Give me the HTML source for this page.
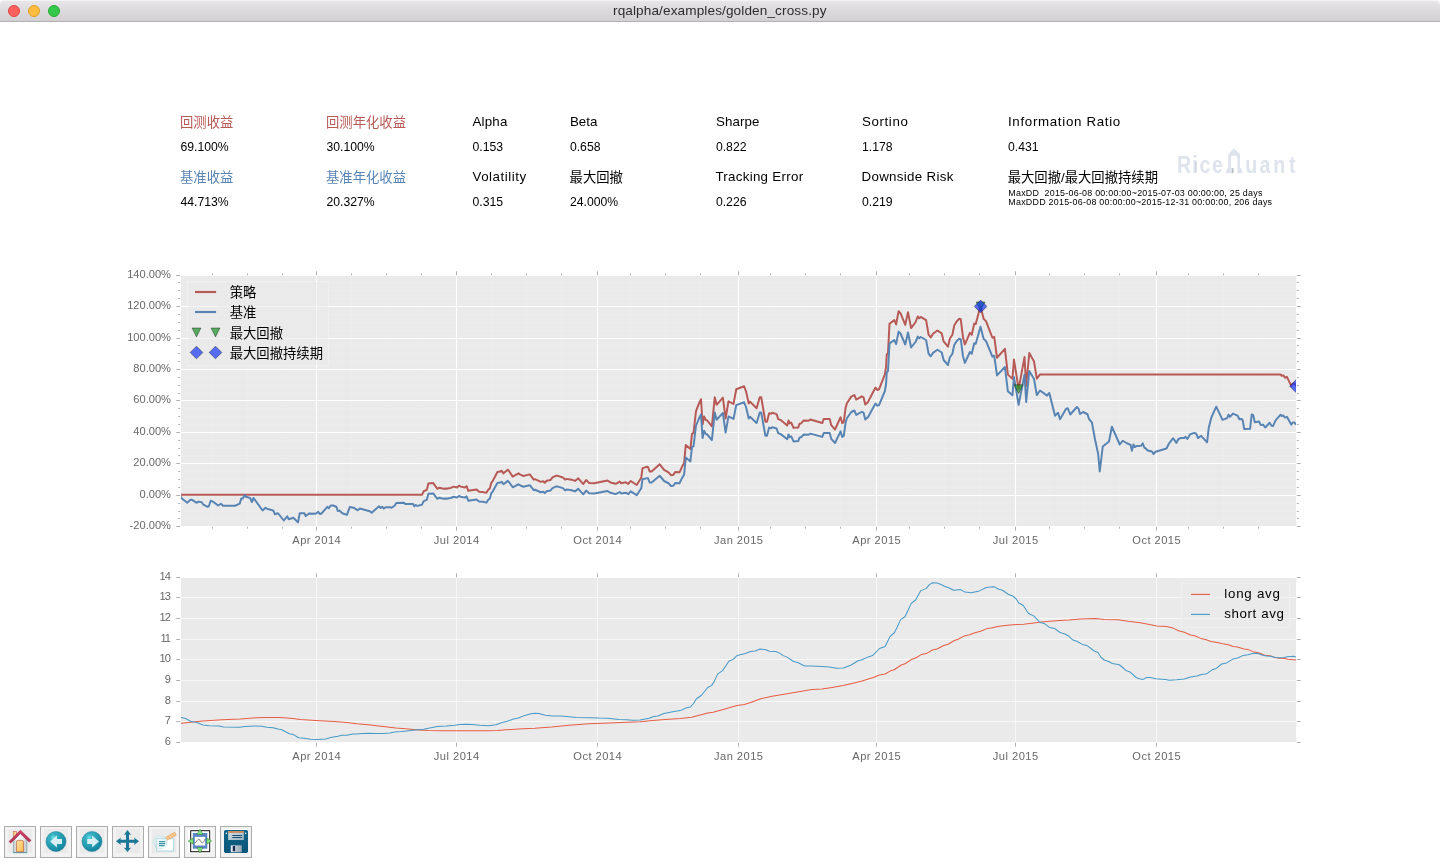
<!DOCTYPE html>
<html lang="en"><head><meta charset="utf-8"><title>rqalpha/examples/golden_cross.py</title>
<style>
html,body{margin:0;padding:0;background:#fff;}
body{width:1440px;height:864px;position:relative;overflow:hidden;font-family:"Liberation Sans",sans-serif;}
#tb{position:absolute;left:0;top:0;width:1440px;height:21px;background:linear-gradient(#e9e7e9,#dcdadc 50%,#d2d0d2);border-bottom:1px solid #b2b0b2;border-top-left-radius:4.5px;border-top-right-radius:4.5px;box-shadow:inset 0 1px 0 #f5f4f5;}
#tb i{position:absolute;top:5px;width:12px;height:12px;box-sizing:border-box;border-radius:50%;border:0.6px solid;}
#tb span{will-change:transform;position:absolute;left:613.2px;top:3.4px;white-space:nowrap;font-size:13.6px;line-height:normal;color:#2e2e2e;letter-spacing:0.11px;}
#fig{position:absolute;left:0;top:0;}
#txt{position:absolute;left:0;top:0;width:1440px;height:864px;will-change:transform;}
.t{position:absolute;white-space:nowrap;line-height:normal;}
.cjk{font-family:"Liberation Sans","Noto Sans CJK SC",sans-serif;font-size:13.33px;}
</style></head><body>
<div id="tb"><i style="left:8px;background:#fc615d;border-color:#e0443e"></i><i style="left:28px;background:#fdbc40;border-color:#dea123"></i><i style="left:48px;background:#34c84a;border-color:#27aa35"></i><span>rqalpha/examples/golden_cross.py</span></div>
<svg id="fig" width="1440" height="864" viewBox="0 0 1440 864">
<rect x="180" y="275" width="1116" height="251" fill="#eaeaea"/>
<path d="M212.5 274.58V526.27M247.5 274.58V526.27M282.5 274.58V526.27M351.5 274.58V526.27M386.5 274.58V526.27M421.5 274.58V526.27M491.5 274.58V526.27M526.5 274.58V526.27M561.5 274.58V526.27M630.5 274.58V526.27M665.5 274.58V526.27M700.5 274.58V526.27M770.5 274.58V526.27M805.5 274.58V526.27M840.5 274.58V526.27M909.5 274.58V526.27M944.5 274.58V526.27M979.5 274.58V526.27M1049.5 274.58V526.27M1084.5 274.58V526.27M1119.5 274.58V526.27M1188.5 274.58V526.27M1223.5 274.58V526.27M1258.5 274.58V526.27M180 518.5H1296M180 511.5H1296M180 503.5H1296M180 487.5H1296M180 479.5H1296M180 471.5H1296M180 455.5H1296M180 448.5H1296M180 440.5H1296M180 424.5H1296M180 416.5H1296M180 408.5H1296M180 393.5H1296M180 385.5H1296M180 377.5H1296M180 361.5H1296M180 353.5H1296M180 345.5H1296M180 330.5H1296M180 322.5H1296M180 314.5H1296M180 298.5H1296M180 290.5H1296M180 282.5H1296" stroke="#fff" stroke-width="0.22" stroke-opacity="0.55" fill="none"/>
<path d="M316.5 274.58V526.27M456.5 274.58V526.27M597.5 274.58V526.27M738.5 274.58V526.27M876.5 274.58V526.27M1015.5 274.58V526.27M1156.5 274.58V526.27M180 526.5H1296M180 495.5H1296M180 463.5H1296M180 432.5H1296M180 400.5H1296M180 369.5H1296M180 338.5H1296M180 306.5H1296M180 275.5H1296" stroke="#fff" stroke-width="1.11" stroke-opacity="1" fill="none"/>
<clipPath id="c1"><rect x="180" y="274.58" width="1116" height="251.69"/></clipPath>
<g clip-path="url(#c1)">
<polyline points="180,494.81 422,494.81 423.7,491.25 426.8,489.87 428.4,483.39 433.25,483.07 434.5,484.88 437.4,488.81 439.1,487.75 443.7,488.81 445.75,488.54 446.6,488.81 448.7,488.22 450.75,487.96 453.7,486.63 457,487.53 459.1,485.73 460.75,486.63 464.9,487.53 466.6,486.15 468.25,490.83 476.6,489.55 479.1,491.68 482.8,491.94 486.4,492.84 488.25,489.76 489.9,488.38 491.2,483.07 492.8,480.84 497.4,472.02 500.3,471.6 501.8,470.7 503.5,473.35 507.8,469.79 509,470.96 512.7,476.59 518.5,473.35 520.3,474.68 523.5,476.01 529.5,474.41 530.4,475.1 533.75,479.67 535,479.19 540.8,481.85 543.3,481.27 544.8,482.75 546.7,480.73 550.4,480.1 552.5,477.44 555.8,475.85 557.9,475.85 562.9,477.44 565,479.67 567.1,478.93 571.7,479.67 575,480.95 578.3,478.29 583.3,484.03 586.1,480.1 589.2,482.97 594.2,483.18 607.5,480.52 610.4,482.43 615.8,483.82 619.6,481.58 621.25,483.18 625.8,482.33 628.3,483.92 630.7,480.95 636.7,484.98 641.25,477.65 642.5,468.09 647.3,466.82 648,466.98 649.75,471.6 651.6,471.6 659.75,464.32 664.1,469.9 668.5,472.29 671,475.21 673.25,474.94 675.4,471.92 679.5,472.29 682.25,466.29 684.1,463.26 685.75,445.04 690.4,449.08 692,433.78 693.5,433.14 696,411.21 698.5,404.57 701,399.26 702.6,424.22 704.1,416.52 705.75,419.86 707.25,420.5 711.9,426.45 714.75,397.24 716.6,404.83 722.9,397.66 725.6,418.48 728.5,401.27 733.5,403.93 736.25,389.27 744.1,386.24 746,391.29 748.75,403.51 750,401.65 756.6,408.29 759.75,397.24 761.25,397.24 765.4,421.83 767,421.83 769.1,413.17 771,413.86 772.25,412.8 776.6,414.13 778.25,419.17 780.4,419.86 787.25,425.55 788.5,420.5 789.75,423.42 791.25,422.52 793.5,427.83 798.25,427.51 799.5,423.8 801,423.42 803.75,420.5 808.5,420.77 810.4,419.55 822.25,423.05 823.75,418.91 829.75,418.91 831.25,425.18 835,429.53 840.6,417.21 842.25,423.16 843.75,422.1 845.6,407.86 846.9,403.24 851.25,396.6 854.4,395.01 856.25,399.68 861.9,396.33 863.5,397.24 865.25,404.57 868.1,401.91 873.5,391.29 875.6,387.57 877.25,389.96 879,389.27 884.9,374.29 886.1,366.32 886.75,354.37 888,353.05 889.5,323.83 894.25,320.11 896.1,324.47 898.6,311.19 900.5,313.21 905.25,324.9 908,312.15 911.1,328.08 915.5,322.24 917.75,316.5 919.25,318.26 920.75,316.93 926.1,320.11 928.6,334.72 930.75,337.38 933,333.82 937.4,330.47 941.75,333.39 943.6,341.36 948,346.67 949.9,338.44 952.4,334.72 954.25,325.43 956.75,321.18 959.25,318.79 960.75,319.16 963,337.38 964.9,344.44 969.9,332.86 971.75,334.72 974.25,323.57 975.75,324.1 980.5,305.99 983.6,318.79 986.1,321.44 992.4,337.75 994.25,336.85 997,357.72 1004.9,348.8 1007.9,374.61 1012.45,378.86 1014,359.53 1018.6,389.06 1024.5,357.08 1026.2,385.98 1029.3,353.1 1034,361.44 1036.8,378.65 1040,374.4 1280.6,374.4 1281.7,375.91 1283.4,375.33 1285,377.76 1286.9,376.84 1291.25,385.88 1292.8,383.44 1294.6,383.44 1296,386.11" fill="none" stroke="#b75955" stroke-width="1.98" stroke-linejoin="round"/>
<polyline points="180,495.2 181.6,498.2 187.2,502.7 190.5,499.85 192,499.8 196.75,502.8 198.4,501.6 201.75,502.2 203.4,504.7 207.6,506.9 208.8,506.3 210.7,500.7 213.8,502.2 218.2,505.5 220.9,503.7 223,505.75 235.1,505.75 239.7,503.7 241.3,498.4 243,498.4 244.4,495.1 245.9,496.75 250.1,498 251.9,502 253.6,498 262.6,510.5 265.5,507.8 267.6,509 272.6,510.25 273.8,511.3 274.8,514.25 278,513.25 283.8,520.5 287.2,516.3 288.8,519.25 293.4,517.75 298,522.4 299.7,513.25 304.4,513.25 305.7,516 309,513.5 315.7,513.7 318.2,511.8 320,514.1 321.5,513.5 327.3,506.8 328.8,508.25 330.7,505.5 333.2,505.5 336.5,507 337.75,511 339.4,510.6 342.3,513.25 346.9,514.9 349.8,507 353.6,507.7 357.75,510.3 359.8,508.5 369.8,511.2 371.7,512.8 379,506.2 380.7,508 382.3,506.8 383.8,508.5 385.7,507.2 389.8,507.2 391.7,507.8 394.8,505.5 396.3,503.1 404,502.8 405.25,504.1 413.2,504.1 414.3,506.3 415.75,505.1 417.4,505.9 422,504.7 423.7,501.1 426.8,499.8 428.4,493.7 433.25,493.4 434.5,495.1 437.4,498.8 439.1,497.8 443.7,498.8 445.75,498.55 446.6,498.8 448.7,498.25 450.75,498 453.7,496.75 457,497.6 459.1,495.9 460.75,496.75 464.9,497.6 466.6,496.3 468.25,500.7 476.6,499.5 479.1,501.5 482.8,501.75 486.4,502.6 488.25,499.7 489.9,498.4 491.2,493.4 492.8,491.3 497.4,483 500.3,482.6 501.8,481.75 503.5,484.25 507.8,480.9 509,482 512.7,487.3 518.5,484.25 520.3,485.5 523.5,486.75 529.5,485.25 530.4,485.9 533.75,490.2 535,489.75 540.8,492.25 543.3,491.7 544.8,493.1 546.7,491.2 550.4,490.6 552.5,488.1 555.8,486.6 557.9,486.6 562.9,488.1 565,490.2 567.1,489.5 571.7,490.2 575,491.4 578.3,488.9 583.3,494.3 586.1,490.6 589.2,493.3 594.2,493.5 607.5,491 610.4,492.8 615.8,494.1 619.6,492 621.25,493.5 625.8,492.7 628.3,494.2 630.7,491.4 636.7,495.2 641.25,488.3 642.5,479.3 647.3,478.1 648,478.25 649.75,482.6 651.6,482.6 659.75,475.75 664.1,481 668.5,483.25 671,486 673.25,485.75 675.4,482.9 679.5,483.25 682.25,477.6 684.1,474.75 685.75,457.6 690.4,461.4 692,447 693.5,446.4 696,425.75 698.5,419.5 701,414.5 702.6,438 704.1,430.75 705.75,433.9 707.25,434.5 711.9,440.1 714.75,412.6 716.6,419.75 722.9,413 725.6,432.6 728.5,416.4 733.5,418.9 736.25,405.1 744.1,402.25 746,407 748.75,418.5 750,416.75 756.6,423 759.75,412.6 761.25,412.6 765.4,435.75 767,435.75 769.1,427.6 771,428.25 772.25,427.25 776.6,428.5 778.25,433.25 780.4,433.9 787.25,439.25 788.5,434.5 789.75,437.25 791.25,436.4 793.5,441.4 798.25,441.1 799.5,437.6 801,437.25 803.75,434.5 808.5,434.75 810.4,433.6 822.25,436.9 823.75,433 829.75,433 831.25,438.9 835,443 840.6,431.4 842.25,437 843.75,436 845.6,422.6 846.9,418.25 851.25,412 854.4,410.5 856.25,414.9 861.9,411.75 863.5,412.6 865.25,419.5 868.1,417 873.5,407 875.6,403.5 877.25,405.75 879,405.1 884.9,391 886.1,383.5 886.75,372.25 888,371 889.5,343.5 894.25,340 896.1,344.1 898.6,331.6 900.5,333.5 905.25,344.5 908,332.5 911.1,347.5 915.5,342 917.75,336.6 919.25,338.25 920.75,337 926.1,340 928.6,353.75 930.75,356.25 933,352.9 937.4,349.75 941.75,352.5 943.6,360 948,365 949.9,357.25 952.4,353.75 954.25,345 956.75,341 959.25,338.75 960.75,339.1 963,356.25 964.9,362.9 969.9,352 971.75,353.75 974.25,343.25 975.75,343.75 980.5,326.7 983.6,338.75 986.1,341.25 992.4,356.6 994.25,355.75 997,375.4 1004.9,367 1007.9,391.3 1012.45,395.3 1014,377.1 1018.6,404.9 1024.5,374.8 1026.2,402 1029.3,371.05 1034,378.9 1036.8,395.1 1040,390.45 1047.1,395.6 1049.3,392.95 1055,415.75 1058.1,412.75 1060,419.25 1066.25,408.6 1067.75,408.25 1070.25,414.5 1076.9,407 1078.5,408.6 1080,414 1083.1,412 1087.5,414.25 1089,419 1091.9,422.4 1095,439.25 1098.1,453.6 1099.75,471.5 1102.75,446.5 1109,441.5 1111.9,426.75 1119.75,444.5 1122.75,440.75 1126.9,443.25 1130.6,444.9 1131.9,450.75 1133.5,444.5 1134.75,447 1136.5,446.1 1141.25,445.75 1142.75,443.25 1144.4,447.75 1145.6,448.25 1147.75,450.5 1151.9,451.5 1153.5,454 1155.6,451.75 1166.5,448.5 1168.85,443.75 1173.15,438.2 1176.4,442.9 1178.3,439.2 1180.5,438.05 1184.2,437.9 1185.5,436.9 1187.3,438.9 1190.2,434.2 1194.4,432.9 1196.25,433.75 1198,438.1 1201.1,435.8 1207.1,442.3 1208.75,427.7 1211.6,416.8 1216.25,406.7 1222.5,419.9 1227.2,418.1 1228.5,414.7 1230,416.8 1232.9,413.6 1237.6,415.7 1239.4,419.2 1241.8,418.9 1242.8,420.6 1244.2,429 1250.1,428.75 1251.7,414.4 1253.2,415.2 1254.8,422.2 1259,421.5 1260.8,425.1 1263.1,424.6 1265.2,427.5 1269.6,422.8 1271.5,425.8 1273,426.1 1275.6,420.4 1280.6,414.7 1281.7,416 1283.4,415.5 1285,417.6 1286.9,416.8 1291.25,424.6 1292.8,422.5 1294.6,422.5 1296,424.8" fill="none" stroke="#5884b4" stroke-width="1.98" stroke-linejoin="round"/>
<path d="M1014.25 384.75L1023.15 384.75L1018.7 393.65Z" fill="#199022" fill-opacity="0.7" stroke="#000" stroke-opacity="0.6" stroke-width="0.6"/>
<path d="M976.15 301.95L985.05 301.95L980.6 310.85Z" fill="#199022" fill-opacity="0.7" stroke="#000" stroke-opacity="0.6" stroke-width="0.6"/>
<path d="M980.6 300.05L986.95 306.4L980.6 312.75L974.25 306.4Z" fill="#1536f5" fill-opacity="0.7" stroke="#000" stroke-opacity="0.6" stroke-width="0.6"/>
<path d="M1296 379.85L1302.35 386.2L1296 392.55L1289.65 386.2Z" fill="#1536f5" fill-opacity="0.7" stroke="#000" stroke-opacity="0.6" stroke-width="0.6"/>
</g>
<rect x="180.5" y="275.5" width="1116" height="251" fill="none" stroke="#fff" stroke-width="1"/>
<path d="M316.5 275.3v-4M316.5 526.7v4M456.5 275.3v-4M456.5 526.7v4M597.5 275.3v-4M597.5 526.7v4M738.5 275.3v-4M738.5 526.7v4M876.5 275.3v-4M876.5 526.7v4M1015.5 275.3v-4M1015.5 526.7v4M1156.5 275.3v-4M1156.5 526.7v4M180.2 526.5h-4M1296.8 526.5h4M180.2 495.5h-4M1296.8 495.5h4M180.2 463.5h-4M1296.8 463.5h4M180.2 432.5h-4M1296.8 432.5h4M180.2 400.5h-4M1296.8 400.5h4M180.2 369.5h-4M1296.8 369.5h4M180.2 338.5h-4M1296.8 338.5h4M180.2 306.5h-4M1296.8 306.5h4M180.2 275.5h-4M1296.8 275.5h4" stroke="#686868" stroke-width="0.52" fill="none"/>
<path d="M212.5 275.3v-2M212.5 526.7v2M247.5 275.3v-2M247.5 526.7v2M282.5 275.3v-2M282.5 526.7v2M351.5 275.3v-2M351.5 526.7v2M386.5 275.3v-2M386.5 526.7v2M421.5 275.3v-2M421.5 526.7v2M491.5 275.3v-2M491.5 526.7v2M526.5 275.3v-2M526.5 526.7v2M561.5 275.3v-2M561.5 526.7v2M630.5 275.3v-2M630.5 526.7v2M665.5 275.3v-2M665.5 526.7v2M700.5 275.3v-2M700.5 526.7v2M770.5 275.3v-2M770.5 526.7v2M805.5 275.3v-2M805.5 526.7v2M840.5 275.3v-2M840.5 526.7v2M909.5 275.3v-2M909.5 526.7v2M944.5 275.3v-2M944.5 526.7v2M979.5 275.3v-2M979.5 526.7v2M1049.5 275.3v-2M1049.5 526.7v2M1084.5 275.3v-2M1084.5 526.7v2M1119.5 275.3v-2M1119.5 526.7v2M1188.5 275.3v-2M1188.5 526.7v2M1223.5 275.3v-2M1223.5 526.7v2M1258.5 275.3v-2M1258.5 526.7v2M180.2 518.5h-2M1296.8 518.5h2M180.2 511.5h-2M1296.8 511.5h2M180.2 503.5h-2M1296.8 503.5h2M180.2 487.5h-2M1296.8 487.5h2M180.2 479.5h-2M1296.8 479.5h2M180.2 471.5h-2M1296.8 471.5h2M180.2 455.5h-2M1296.8 455.5h2M180.2 448.5h-2M1296.8 448.5h2M180.2 440.5h-2M1296.8 440.5h2M180.2 424.5h-2M1296.8 424.5h2M180.2 416.5h-2M1296.8 416.5h2M180.2 408.5h-2M1296.8 408.5h2M180.2 393.5h-2M1296.8 393.5h2M180.2 385.5h-2M1296.8 385.5h2M180.2 377.5h-2M1296.8 377.5h2M180.2 361.5h-2M1296.8 361.5h2M180.2 353.5h-2M1296.8 353.5h2M180.2 345.5h-2M1296.8 345.5h2M180.2 330.5h-2M1296.8 330.5h2M180.2 322.5h-2M1296.8 322.5h2M180.2 314.5h-2M1296.8 314.5h2M180.2 298.5h-2M1296.8 298.5h2M180.2 290.5h-2M1296.8 290.5h2M180.2 282.5h-2M1296.8 282.5h2" stroke="#686868" stroke-width="0.52" fill="none"/>
<rect x="187.5" y="281.5" width="141" height="84" fill="#eaeaea" fill-opacity="0.5" stroke="#fff" stroke-opacity="0.5" stroke-width="0.56"/>
<path d="M195 292H216.1" stroke="#b75955" stroke-width="2.15"/>
<path d="M195 312H216.1" stroke="#5884b4" stroke-width="2.15"/>
<path d="M192.05 328L200.95 328L196.5 336.9Z" fill="#199022" fill-opacity="0.7" stroke="#000" stroke-opacity="0.6" stroke-width="0.6"/>
<path d="M211.05 328L219.95 328L215.5 336.9Z" fill="#199022" fill-opacity="0.7" stroke="#000" stroke-opacity="0.6" stroke-width="0.6"/>
<path d="M196.5 346.15L202.85 352.5L196.5 358.85L190.15 352.5Z" fill="#1536f5" fill-opacity="0.7" stroke="#000" stroke-opacity="0.6" stroke-width="0.6"/>
<path d="M215.5 346.15L221.85 352.5L215.5 358.85L209.15 352.5Z" fill="#1536f5" fill-opacity="0.7" stroke="#000" stroke-opacity="0.6" stroke-width="0.6"/>
<rect x="180" y="577" width="1116" height="165" fill="#eaeaea"/>
<path d="M316.5 576.61V742M456.5 576.61V742M597.5 576.61V742M738.5 576.61V742M876.5 576.61V742M1015.5 576.61V742M1156.5 576.61V742M180 742.5H1296M180 721.5H1296M180 701.5H1296M180 680.5H1296M180 659.5H1296M180 639.5H1296M180 618.5H1296M180 597.5H1296M180 577.5H1296" stroke="#fff" stroke-width="0.62" stroke-opacity="1" fill="none"/>
<clipPath id="c2"><rect x="180" y="576.61" width="1116" height="165.39"/></clipPath>
<g clip-path="url(#c2)">
<polyline points="180,723.5 190.5,722.25 203,721 221.75,719.75 240.5,719.1 255.5,717.75 268,717.5 280.5,717.5 293,718.5 300.5,719.6 315.5,720.6 334.25,721.5 346.75,722.5 357,723.75 368.5,724.75 381,726.25 396,728.1 408.5,729.1 418.5,730 428.5,730.6 443.5,730.75 468.5,730.75 487.25,730.75 497.25,730.4 506,729.75 518.5,729.1 528.5,728.5 535,728.2 551.5,727 569,725.25 589,723.75 609,723.1 621.5,722.6 640.25,721.75 652.75,720.6 665.25,719.5 680.25,718.5 691.5,717.25 700.25,715 707.75,713.1 713,712.3 723.25,709.4 737,705.6 744.5,704.5 752,701.9 760.75,698.75 772,696.25 787,693.75 803.25,690.9 812,689.6 822,689.1 832,687.5 843.25,685.6 852,683.5 862,680.9 873.25,677.5 879.5,675 885.1,674 891,670.6 893.75,670 901.25,665 905,663.75 911.25,659.6 915.6,658 921.25,654.6 926.25,653.6 932.5,650 936.9,649 943.75,645.5 948.1,644.25 954.4,640.5 958.1,639.25 964.4,635.9 968.75,635 975,632.75 980.6,631.25 986.9,628.6 991.25,628 997.5,626.5 1007.5,625.25 1016.25,624.6 1023.75,624.25 1033.75,623.1 1041.25,622.1 1050,621.25 1060,620.6 1069,620.1 1080.5,619 1095.5,618.5 1104.25,619.4 1118,619.75 1128,621.25 1140.5,622.75 1149.25,624.4 1156.75,626 1166.75,626.6 1173,628.1 1179.25,631 1184.25,632.25 1190.5,635 1195.5,636 1200.5,638.4 1205.5,639.5 1211,641.5 1217.5,642.4 1222.5,643.75 1228.5,644.8 1233,646.5 1237.5,647.1 1244,648.9 1248.3,649.6 1254.2,652.1 1258.3,652.7 1265,655.2 1270,655.8 1275,657.5 1280,658.3 1284.2,658.5 1288.3,659.2 1296,660" fill="none" stroke="#e75d44" stroke-width="1.02" stroke-linejoin="round"/>
<polyline points="180,717.3 185.5,718.5 190.5,721.25 196.75,722.5 203,725 209.25,725.75 219.25,726 223.6,727 239.25,727.25 245.5,726.5 255.5,726 261.75,726.25 266.75,727.25 273,727.75 278,729.1 281.75,729.75 289.25,733.75 293,734.4 298.6,737.75 304.25,738.25 310.5,739.25 316.75,739.5 325.5,739 331.75,737.25 338,736.25 341.75,735.25 346.75,735.25 353,734 357,734.1 362.25,733.5 369.75,733.25 374.75,733.6 383.5,733.6 389.75,733.1 394.75,732.1 401,731.6 407.25,730.9 414.75,730.1 423.5,729.25 429.75,727.9 437.25,726.5 446,726 454.75,725.25 459.75,724.5 466,724.25 472.25,724.6 479.75,725.25 488.5,725.75 496,724.75 502.25,722.5 507.25,721.25 513.5,719.1 518.5,718 524.75,715.4 531,713.75 535,713.2 539,713.5 545.25,715.25 552.75,716 561.5,716 571.5,716.9 576.5,717.5 590.25,717.75 599,718.1 607.75,718.25 619,719.4 626.5,719.75 632.75,720.25 640.25,720 649,718.25 654,716.5 657.75,715.9 664,713.5 669,712.5 674,711.6 680.25,710.6 686.5,707.75 690.25,707.1 693.4,703.75 696.5,698.75 701.5,695.25 707.75,687.5 711.5,685.6 714,681.9 717.6,674.1 722.6,670.6 728.9,661.25 733.25,659.4 737,655.6 744.5,653.75 750.75,651.5 755.1,651 760.1,649 765.75,649.75 769.5,651.25 775.75,651.5 779.5,653.1 783.25,655.6 787,657.1 793.25,661.25 798.25,662.75 804.5,666 812,665.9 822,666.5 829.5,667.1 836.4,668.25 843.25,668 850.75,665.25 857.6,661 862,659.75 868.25,656.9 872.6,655.6 879.5,648.5 885.1,646.5 890.1,636.4 894.4,632.75 896.9,627.75 900.6,619.6 905,616.75 907.5,611.5 911.25,603.4 915.6,600 920.6,590.9 926.25,588.4 929.4,584.6 932.5,582.75 936.9,583.1 940.6,584.25 944.4,586.25 948.75,587.75 953.75,590.25 960.6,589.6 965,592.1 971.25,592.75 979.4,590.9 986.25,587.5 992.5,586.75 995,587.1 998.1,589 1002.5,590.25 1008.1,594.25 1013.1,596.25 1016.25,599 1018.75,603 1023.1,605.25 1028.1,613 1030,614.25 1033.75,615.9 1040,622.5 1044.4,623.6 1049.4,627.4 1055,628.6 1060,632.5 1065,634 1069,636.3 1072.4,639.75 1076.75,641.25 1082.4,644.4 1086.75,645.4 1094.25,651 1098,652.5 1101.1,657.5 1104.25,660 1108,661.25 1112.4,663.5 1119.25,664.75 1123,667.75 1126.1,670.6 1129.9,671.9 1136.1,677.5 1139.25,678.75 1143,679.4 1146.75,677.5 1150.5,677.6 1155.5,678.75 1165.5,679.4 1169.25,680.25 1176.75,679.75 1184.25,679 1190.5,677.1 1196.75,676 1201.5,674.6 1205.5,674.1 1207.5,673.2 1212.2,669.8 1216.2,668.4 1221.7,664 1226.7,662.9 1233.2,658.9 1237.7,658 1242.7,655.6 1248.2,654.8 1252.5,653.5 1256.7,653.3 1260,654.3 1263.3,655.4 1266.7,656 1270.8,656.25 1275,657.5 1278.3,657.7 1284.2,657.5 1287.1,656.7 1293.3,656.3 1296,657.1" fill="none" stroke="#469ac8" stroke-width="1.02" stroke-linejoin="round"/>
</g>
<rect x="180.5" y="577.5" width="1116" height="165" fill="none" stroke="#fff" stroke-width="1"/>
<path d="M316.5 577.3v-4M316.5 742.7v4M456.5 577.3v-4M456.5 742.7v4M597.5 577.3v-4M597.5 742.7v4M738.5 577.3v-4M738.5 742.7v4M876.5 577.3v-4M876.5 742.7v4M1015.5 577.3v-4M1015.5 742.7v4M1156.5 577.3v-4M1156.5 742.7v4M180.2 742.5h-4M1296.8 742.5h4M180.2 721.5h-4M1296.8 721.5h4M180.2 701.5h-4M1296.8 701.5h4M180.2 680.5h-4M1296.8 680.5h4M180.2 659.5h-4M1296.8 659.5h4M180.2 639.5h-4M1296.8 639.5h4M180.2 618.5h-4M1296.8 618.5h4M180.2 597.5h-4M1296.8 597.5h4M180.2 577.5h-4M1296.8 577.5h4" stroke="#686868" stroke-width="0.52" fill="none"/>
<rect x="1181.5" y="583.5" width="108" height="44" fill="#eaeaea" fill-opacity="0.5" stroke="#fff" stroke-opacity="0.5" stroke-width="0.56"/>
<path d="M1191 594.4H1210" stroke="#e75d44" stroke-width="1.11"/>
<path d="M1191 614.4H1210" stroke="#469ac8" stroke-width="1.11"/>
<text class="cjk" x="180" y="127.3" fill="#b75955">回测收益</text>
<text class="cjk" x="326" y="127.3" fill="#b75955">回测年化收益</text>
<text class="cjk" x="180" y="182.3" fill="#5884b4">基准收益</text>
<text class="cjk" x="326" y="182.3" fill="#5884b4">基准年化收益</text>
<text class="cjk" x="569.6" y="182.3" fill="#000">最大回撤</text>
<text class="cjk" x="1007.7" y="182.3" fill="#000">最大回撤/最大回撤持续期</text>
<text class="cjk" x="229.7" y="297.4" fill="#000">策略</text>
<text class="cjk" x="229.7" y="317.4" fill="#000">基准</text>
<text class="cjk" x="229.7" y="337.5" fill="#000">最大回撤</text>
<text class="cjk" x="229.7" y="357.7" fill="#000">最大回撤持续期</text>
<g id="logo" fill="#dee3ec" font-family="Liberation Sans, sans-serif" font-weight="bold" font-size="23.4">
<text transform="translate(1176.88 172.9) scale(0.84 1)">R</text>
<text transform="translate(1192.27 172.9) scale(0.84 1)">i</text>
<text transform="translate(1199.53 172.9) scale(0.84 1)">c</text>
<text transform="translate(1212.07 172.9) scale(0.84 1)">e</text>
<text transform="translate(1245.36 172.9) scale(0.84 1)">u</text>
<text transform="translate(1259.41 172.9) scale(0.84 1)">a</text>
<text transform="translate(1273.13 172.9) scale(0.84 1)">n</text>
<text transform="translate(1288.95 172.9) scale(0.84 1)">t</text>
<path d="M1225.4 173.3L1227.2 168.2H1228.2V154.3L1234.1 148.2L1240 154.3V168.2H1241L1242.8 173.3H1237.4V158.5Q1237.4 155.6 1234.1 155.6Q1230.9 155.6 1230.9 158.5V168H1233.6V173.3Z"/>
<path d="M1232.8 168.2V173.2" stroke="#9fa3aa" stroke-width="0.8" fill="none"/>
<path d="M1196.1 161.8V172.6" stroke="#b4b8bf" stroke-width="0.6" fill="none"/>
</g>

</svg>
<div id="txt">
<div class="t" style="top:139.84px;font-size:12.22px;color:#000;left:180.5px;">69.100%</div>
<div class="t" style="top:139.84px;font-size:12.22px;color:#000;left:326.5px;">30.100%</div>
<div class="t" style="top:194.84px;font-size:12.22px;color:#000;left:180.5px;">44.713%</div>
<div class="t" style="top:194.84px;font-size:12.22px;color:#000;left:326.5px;">20.327%</div>
<div class="t" style="top:113.69px;font-size:13.33px;color:#000;letter-spacing:0.2px;left:472.5px;">Alpha</div>
<div class="t" style="top:139.84px;font-size:12.22px;color:#000;left:472.5px;">0.153</div>
<div class="t" style="top:113.69px;font-size:13.33px;color:#000;left:569.9px;">Beta</div>
<div class="t" style="top:139.84px;font-size:12.22px;color:#000;left:569.9px;">0.658</div>
<div class="t" style="top:113.69px;font-size:13.33px;color:#000;letter-spacing:0.1px;left:715.9px;">Sharpe</div>
<div class="t" style="top:139.84px;font-size:12.22px;color:#000;left:715.9px;">0.822</div>
<div class="t" style="top:113.69px;font-size:13.33px;color:#000;letter-spacing:0.6px;left:862px;">Sortino</div>
<div class="t" style="top:139.84px;font-size:12.22px;color:#000;left:862px;">1.178</div>
<div class="t" style="top:113.69px;font-size:13.33px;color:#000;letter-spacing:0.67px;left:1008px;">Information Ratio</div>
<div class="t" style="top:139.84px;font-size:12.22px;color:#000;left:1008px;">0.431</div>
<div class="t" style="top:168.69px;font-size:13.33px;color:#000;letter-spacing:0.52px;left:472.5px;">Volatility</div>
<div class="t" style="top:194.84px;font-size:12.22px;color:#000;left:472.5px;">0.315</div>
<div class="t" style="top:194.84px;font-size:12.22px;color:#000;left:569.9px;">24.000%</div>
<div class="t" style="top:168.69px;font-size:13.33px;color:#000;letter-spacing:0.29px;left:715.4px;">Tracking Error</div>
<div class="t" style="top:194.84px;font-size:12.22px;color:#000;left:715.9px;">0.226</div>
<div class="t" style="top:168.69px;font-size:13.33px;color:#000;letter-spacing:0.31px;left:861.5px;">Downside Risk</div>
<div class="t" style="top:194.84px;font-size:12.22px;color:#000;left:862px;">0.219</div>
<div class="t" style="top:187.7px;font-size:8.89px;color:#000;letter-spacing:0.25px;left:1008.3px;">MaxDD &nbsp;2015-06-08 00:00:00~2015-07-03 00:00:00, 25 days</div>
<div class="t" style="top:197.45px;font-size:8.89px;color:#000;letter-spacing:0.26px;left:1008.3px;">MaxDDD 2015-06-08 00:00:00~2015-12-31 00:00:00, 206 days</div>
<div class="t" style="top:518.95px;font-size:11.11px;color:#686868;right:1269px;">-20.00%</div>
<div class="t" style="top:487.95px;font-size:11.11px;color:#686868;right:1269px;">0.00%</div>
<div class="t" style="top:455.95px;font-size:11.11px;color:#686868;right:1269px;">20.00%</div>
<div class="t" style="top:424.95px;font-size:11.11px;color:#686868;right:1269px;">40.00%</div>
<div class="t" style="top:392.95px;font-size:11.11px;color:#686868;right:1269px;">60.00%</div>
<div class="t" style="top:361.95px;font-size:11.11px;color:#686868;right:1269px;">80.00%</div>
<div class="t" style="top:330.95px;font-size:11.11px;color:#686868;right:1269px;">100.00%</div>
<div class="t" style="top:298.95px;font-size:11.11px;color:#686868;right:1269px;">120.00%</div>
<div class="t" style="top:267.95px;font-size:11.11px;color:#686868;right:1269px;">140.00%</div>
<div class="t" style="top:533.95px;font-size:11.11px;color:#686868;letter-spacing:0.48px;left:316.74px;transform:translateX(-50%);">Apr 2014</div>
<div class="t" style="top:749.95px;font-size:11.11px;color:#686868;letter-spacing:0.48px;left:316.74px;transform:translateX(-50%);">Apr 2014</div>
<div class="t" style="top:533.95px;font-size:11.11px;color:#686868;letter-spacing:0.48px;left:456.74px;transform:translateX(-50%);">Jul 2014</div>
<div class="t" style="top:749.95px;font-size:11.11px;color:#686868;letter-spacing:0.48px;left:456.74px;transform:translateX(-50%);">Jul 2014</div>
<div class="t" style="top:533.95px;font-size:11.11px;color:#686868;letter-spacing:0.48px;left:597.74px;transform:translateX(-50%);">Oct 2014</div>
<div class="t" style="top:749.95px;font-size:11.11px;color:#686868;letter-spacing:0.48px;left:597.74px;transform:translateX(-50%);">Oct 2014</div>
<div class="t" style="top:533.95px;font-size:11.11px;color:#686868;letter-spacing:0.48px;left:738.74px;transform:translateX(-50%);">Jan 2015</div>
<div class="t" style="top:749.95px;font-size:11.11px;color:#686868;letter-spacing:0.48px;left:738.74px;transform:translateX(-50%);">Jan 2015</div>
<div class="t" style="top:533.95px;font-size:11.11px;color:#686868;letter-spacing:0.48px;left:876.74px;transform:translateX(-50%);">Apr 2015</div>
<div class="t" style="top:749.95px;font-size:11.11px;color:#686868;letter-spacing:0.48px;left:876.74px;transform:translateX(-50%);">Apr 2015</div>
<div class="t" style="top:533.95px;font-size:11.11px;color:#686868;letter-spacing:0.48px;left:1015.74px;transform:translateX(-50%);">Jul 2015</div>
<div class="t" style="top:749.95px;font-size:11.11px;color:#686868;letter-spacing:0.48px;left:1015.74px;transform:translateX(-50%);">Jul 2015</div>
<div class="t" style="top:533.95px;font-size:11.11px;color:#686868;letter-spacing:0.48px;left:1156.74px;transform:translateX(-50%);">Oct 2015</div>
<div class="t" style="top:749.95px;font-size:11.11px;color:#686868;letter-spacing:0.48px;left:1156.74px;transform:translateX(-50%);">Oct 2015</div>
<div class="t" style="top:734.95px;font-size:11.11px;color:#686868;right:1269px;">6</div>
<div class="t" style="top:713.95px;font-size:11.11px;color:#686868;right:1269px;">7</div>
<div class="t" style="top:693.95px;font-size:11.11px;color:#686868;right:1269px;">8</div>
<div class="t" style="top:672.95px;font-size:11.11px;color:#686868;right:1269px;">9</div>
<div class="t" style="top:651.95px;font-size:11.11px;color:#686868;letter-spacing:-0.9px;right:1269.9px;">10</div>
<div class="t" style="top:631.95px;font-size:11.11px;color:#686868;letter-spacing:-0.9px;right:1269.9px;">11</div>
<div class="t" style="top:610.95px;font-size:11.11px;color:#686868;letter-spacing:-0.9px;right:1269.9px;">12</div>
<div class="t" style="top:589.95px;font-size:11.11px;color:#686868;letter-spacing:-0.9px;right:1269.9px;">13</div>
<div class="t" style="top:569.95px;font-size:11.11px;color:#686868;letter-spacing:-0.9px;right:1269.9px;">14</div>
<div class="t" style="top:586.44px;font-size:13.33px;color:#000;letter-spacing:0.75px;left:1224.3px;">long avg</div>
<div class="t" style="top:605.69px;font-size:13.33px;color:#000;letter-spacing:0.6px;left:1224.3px;">short avg</div>
</div>
<svg id="tbar" width="260" height="42" viewBox="0 822 260 42" style="position:absolute;left:0;top:822px">
<defs>
<radialGradient id="gball" cx="0.36" cy="0.30" r="0.75"><stop offset="0" stop-color="#6fe9ee"/><stop offset="0.18" stop-color="#3bb6c6"/><stop offset="0.6" stop-color="#2399b0"/><stop offset="1" stop-color="#14809a"/></radialGradient>
<linearGradient id="gdoor" x1="0" y1="0" x2="1" y2="1"><stop offset="0" stop-color="#fde6a8"/><stop offset="1" stop-color="#f7b948"/></linearGradient>
<linearGradient id="gwall" x1="0" y1="0" x2="1" y2="0"><stop offset="0" stop-color="#b9c3c5"/><stop offset="0.3" stop-color="#ffffff"/><stop offset="0.7" stop-color="#eef1f1"/><stop offset="1" stop-color="#b4bfc1"/></linearGradient>
<linearGradient id="groof" x1="0" y1="0" x2="0" y2="1"><stop offset="0" stop-color="#cf4566"/><stop offset="1" stop-color="#b02f52"/></linearGradient>
<radialGradient id="glens" cx="0.4" cy="0.35" r="0.7"><stop offset="0" stop-color="#eef7f8"/><stop offset="1" stop-color="#b9dbe2"/></radialGradient>
<linearGradient id="glabel" x1="0" y1="0" x2="1" y2="1"><stop offset="0" stop-color="#d3e0e6"/><stop offset="1" stop-color="#9fb6c2"/></linearGradient>
<linearGradient id="gshut" x1="0" y1="0" x2="1" y2="0"><stop offset="0" stop-color="#e8eef0"/><stop offset="0.5" stop-color="#b4c2ca"/><stop offset="1" stop-color="#93a6b0"/></linearGradient>
<linearGradient id="gflop" x1="0" y1="0" x2="0" y2="1"><stop offset="0" stop-color="#0f6688"/><stop offset="1" stop-color="#0b557a"/></linearGradient>
</defs>
<g id="btns" fill="#f2f2f2" stroke="#adadad" stroke-width="1">
<rect x="4.5" y="826.5" width="31" height="31"/><rect x="40.5" y="826.5" width="31" height="31"/><rect x="76.5" y="826.5" width="31" height="31"/><rect x="112.5" y="826.5" width="31" height="31"/><rect x="148.5" y="826.5" width="31" height="31"/><rect x="184.5" y="826.5" width="31" height="31"/><rect x="220.5" y="826.5" width="31" height="31"/>
</g>
<g fill="#ebebeb"><rect x="8" y="829" width="24" height="24"/><rect x="44" y="829" width="24" height="24"/><rect x="80" y="829" width="24" height="24"/><rect x="116" y="829" width="24" height="24"/><rect x="152" y="829" width="24" height="24"/></g>
<rect x="188" y="829" width="24" height="24" fill="#fff"/><rect x="224" y="829" width="24" height="24" rx="1.5" fill="#fff"/>
<!-- home -->
<g>
<rect x="13.3" y="831.4" width="3.3" height="6" fill="#fbd58a" stroke="#c9605a" stroke-width="0.6"/>
<path d="M13.4 840.5L20.4 833.6L26.9 839.8V852.6H13.4Z" fill="url(#gwall)" stroke="#8aa3a6" stroke-width="0.7"/>
<path d="M13.1 852.6H27.1" stroke="#4e9aa3" stroke-width="0.9"/>
<path d="M16.4 851.7V842.3Q16.4 840.3 18.4 840.3H21.6Q23.6 840.3 23.6 842.3V851.7Z" fill="url(#gdoor)" stroke="#b5563c" stroke-width="0.7"/>
<path d="M9.1 841.4L20.4 830.1L31 840.3L29.3 842.2L20.4 833.7L10.6 843.3Z" fill="url(#groof)" stroke="#9c2847" stroke-width="0.4"/>
</g>
<!-- back -->
<circle cx="56" cy="841.5" r="10" fill="url(#gball)" stroke="#15788f" stroke-width="0.5"/>
<path d="M50.1 841.5L56.9 835.6V839.1H62V843.9H56.9V847.4Z" fill="#d9eff3"/>
<!-- forward -->
<circle cx="92" cy="841.5" r="10" fill="url(#gball)" stroke="#15788f" stroke-width="0.5"/>
<path d="M98.9 841.5L92.1 835.6V839.1H87.2V843.9H92.1V847.4Z" fill="#d9eff3"/>
<!-- move -->
<g fill="#1b7796">
<rect x="126" y="833" width="3" height="16.5"/><rect x="119.5" y="839.75" width="16.5" height="3"/>
<path d="M127.5 829.9L131.2 834.9L129.5 834.4H125.5L123.8 834.9Z"/>
<path d="M127.5 852.1L131.2 847.4L129.5 847.9H125.5L123.8 847.4Z"/>
<path d="M116 841.25L121 837.6L120.5 839.3V843.2L121 844.9Z"/>
<path d="M139 841.25L134 837.6L134.5 839.3V843.2L134 844.9Z"/>
</g>
<!-- zoom -->
<g>
<rect x="156.7" y="838.7" width="17" height="12.3" fill="#fff" stroke="#a5d3de" stroke-width="0.9"/>
<circle cx="160.2" cy="842" r="7.1" fill="url(#glens)" fill-opacity="0.72" stroke="#cfe5ea" stroke-width="0.5"/>
<rect x="157.2" y="839.2" width="8.8" height="9" fill="#fff" fill-opacity="0.55"/>
<path d="M156.7 848.5V838.7H166.5" fill="none" stroke="#a5d3de" stroke-opacity="0.6" stroke-width="0.8"/>
<path d="M159 841.6H165.2M159 843.6H165.2M159 845.6H164.6" stroke="#3c96a8" stroke-width="1.15"/>
<path d="M165.9 837.2L174.7 832.3L176.2 835.2L167.5 840.1Z" fill="#f9cd98" stroke="#ea9a4a" stroke-width="0.6"/>
<path d="M168.2 836L169.5 838.6M170.6 834.7L171.9 837.3M173 833.4L174.3 836" stroke="#ee9f50" stroke-width="0.45"/>
</g>
<!-- subplots -->
<g>
<rect x="190.7" y="830.7" width="19" height="21" fill="#fff" stroke="#111" stroke-width="1"/>
<rect x="192.8" y="833" width="14.5" height="15.7" fill="#5a86c8"/>
<rect x="194.8" y="836.9" width="10.4" height="8.6" fill="#fff"/>
<path d="M195 843.2C196.5 841.5 197.6 839.3 198.8 839.3C200.3 839.3 200.8 842.9 202.3 842.9C203.5 842.9 204.2 840.4 205.2 839" fill="none" stroke="#222" stroke-width="0.55"/>
<path d="M200 829.2L203.1 834.4H196.9Z M200 852.8L203.1 847.6H196.9Z M188.2 841.1L193.3 838V844.2Z M211.8 841.1L206.7 838V844.2Z" fill="#7fe37f" stroke="#1f6a1f" stroke-width="0.45"/>
</g>
<!-- save -->
<g>
<path d="M225.2 829.9H246.8L248 831.1V851.8L246.8 853H225.2L224 851.8V831.1Z" fill="url(#gflop)"/>
<rect x="228.2" y="831" width="15.6" height="9" fill="url(#glabel)"/>
<rect x="228.2" y="831" width="15.6" height="1.9" fill="#cf8a59"/>
<path d="M232.3 835.5H242.2M232.3 837.5H242.2" stroke="#1d4f73" stroke-width="1"/>
<circle cx="226.3" cy="833.2" r="0.75" fill="#fff"/><circle cx="245.6" cy="833.2" r="0.75" fill="#fff"/>
<rect x="230.8" y="845.3" width="11" height="7" fill="url(#gshut)"/>
<rect x="232.8" y="846" width="2.3" height="5.2" fill="#1d2955"/>
</g>
</svg>

</body></html>
